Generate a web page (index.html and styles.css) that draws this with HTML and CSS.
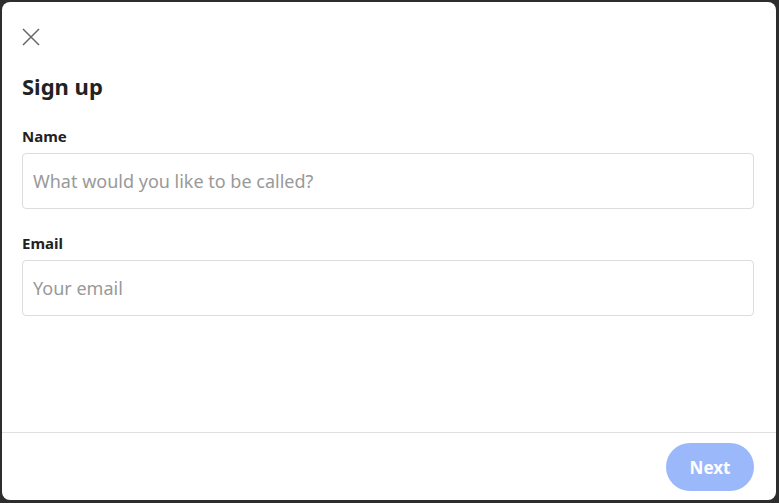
FILE: index.html
```html
<!DOCTYPE html>
<html lang="en">
<head>
<meta charset="utf-8">
<title>Sign up</title>
<link rel="stylesheet" href="styles.css">
</head>
<body>
<div class="dialog">
  <div class="body">
    <button class="close" aria-label="Close">
      <svg width="18" height="18" viewBox="0 0 18 18"><path d="M1 1L17 17M17 1L1 17" stroke="#666" stroke-width="1.5" fill="none"/></svg>
    </button>
    <h1 class="title">Sign up</h1>
    <label class="label">Name</label>
    <div class="input"><span class="placeholder">What would you like to be called?</span></div>
    <label class="label">Email</label>
    <div class="input"><span class="placeholder">Your email</span></div>
  </div>
  <div class="footer">
    <button class="next">Next</button>
  </div>
</div>
</body>
</html>
```

FILE: styles.css
```css
html, body {
  margin: 0;
  height: 100%;
}
body {
  background: #2d2d2d;
  padding: 2px 3px 3px 2px;
  box-sizing: border-box;
  font-family: "Noto Sans", "Open Sans", sans-serif;
  color: #222;
}
.dialog {
  background: #fff;
  border-radius: 8px;
  height: 100%;
  display: flex;
  flex-direction: column;
}
.body {
  flex: 1;
  padding: 26px 22px 0 20px;
  display: flex;
  flex-direction: column;
}
.close {
  width: 18px;
  height: 18px;
  padding: 0;
  border: 0;
  background: none;
  display: block;
}
.close svg { display: block; }
.title {
  margin: 25px 0 0;
  font-size: 22px;
  font-weight: 700;
  line-height: 30px;
  color: #222;
}
.label {
  margin-top: 24px;
  font-size: 15px;
  font-weight: 700;
  line-height: 20px;
  color: #222;
}
.title + .label { margin-top: 25px; }
.input {
  margin-top: 7px;
  height: 54px;
  border: 1px solid #dcdcdc;
  border-radius: 4px;
  display: flex;
  align-items: center;
  padding: 0 10px;
}
.placeholder {
  font-size: 18px;
  color: #999;
}
.footer {
  border-top: 1px solid #e0e0e0;
  padding: 10px 22px 9px 0;
  display: flex;
  justify-content: flex-end;
}
.next {
  width: 88px;
  height: 48px;
  border: 0;
  border-radius: 24px;
  background: #9bb8fb;
  color: #fff;
  font-family: inherit;
  font-size: 17px;
  font-weight: 700;
}
```
